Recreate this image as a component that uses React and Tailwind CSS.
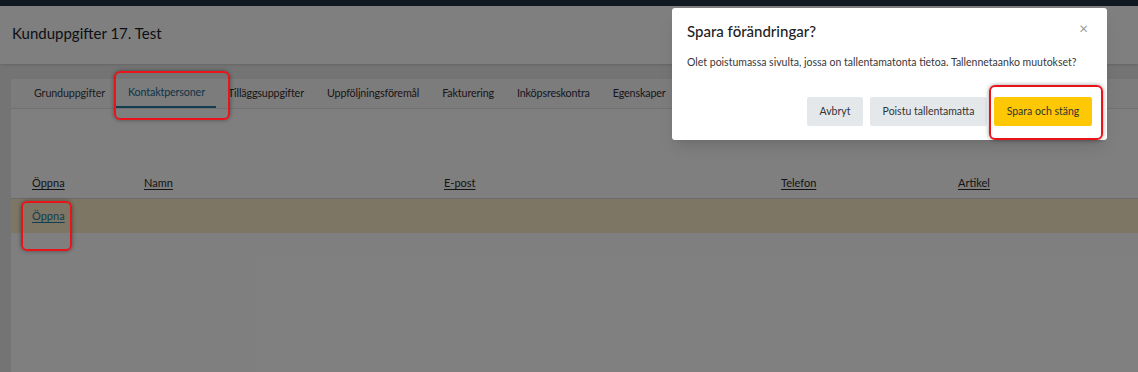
import React from 'react';

const tabs = [
  { name: 'Grunduppgifter', color: 'text-[#3a3a3a]' },
  { name: 'Kontaktpersoner', color: 'text-[#1a6a8e]', active: true },
  { name: 'Tilläggsuppgifter', color: 'text-[#2e2e2e]' },
  { name: 'Uppföljningsföremål', color: 'text-[#3b2a2a]' },
  { name: 'Fakturering', color: 'text-[#3d2a2a]' },
  { name: 'Inköpsreskontra', color: 'text-[#22304a]' },
  { name: 'Egenskaper', color: 'text-[#2f2f3a]' },
];

const columns = [
  { name: 'Öppna', width: 'w-[112px]' },
  { name: 'Namn', width: 'w-[300px]' },
  { name: 'E-post', width: 'w-[337px]' },
  { name: 'Telefon', width: 'w-[177px]' },
  { name: 'Artikel', width: 'flex-1' },
];

export default function App() {
  return (
    <div className="relative w-[1138px] h-[372px] overflow-hidden bg-[#e9e9e9] font-['Lato',_'Noto_Sans',_sans-serif]">
      {/* page underneath the dim layer */}
      <div className="h-[6px] bg-[#223444]" />
      <div className="h-[58px] bg-white flex items-center px-3 pb-[4px] shadow-sm">
        <h1 className="text-[15px] text-[#1c1c2c]">Kunduppgifter 17. Test</h1>
      </div>
      <div className="flex h-[308px] pt-[15px] pl-[11px]">
        <div className="flex-1 flex flex-col bg-white">
          <div className="flex h-[30px] bg-[#f8f8f8] border-b border-[#e2e2e2] pl-[11px]">
            {tabs.map((t) => (
              <div
                key={t.name}
                className={`flex items-center pl-3 pr-[11px] text-[10.75px] tracking-[-0.15px] whitespace-nowrap ${t.color} ${t.active ? 'border-b-2 border-[#2a7ba3]' : ''}`}
              >
                {t.name}
              </div>
            ))}
          </div>

          <div className="pt-[65px]">
            <div className="flex h-[25px] items-start pt-[1px] pl-[21px] border-b border-[#d5d5d5] text-[11px] leading-[15px] text-[#2a2a2a]">
              {columns.map((c) => (
                <div key={c.name} className={c.width}>
                  <span className="underline underline-offset-2">{c.name}</span>
                </div>
              ))}
            </div>
            <div className="flex h-[34px] items-center pl-[21px] bg-[#fcecca] text-[11px]">
              <span className="text-[#1f7aa3] underline underline-offset-2">Öppna</span>
            </div>
          </div>
        </div>
      </div>

      {/* dim layer */}
      <div className="absolute inset-0 bg-black/50" />

      {/* modal */}
      <div className="absolute left-[672px] top-[8px] w-[435px] bg-white rounded-[3px] shadow-lg px-[15px] pt-[12px] pb-[14px]">
        <div className="flex items-start justify-between">
          <h2 className="text-[15px] font-medium text-[#222] leading-[22px]">Spara förändringar?</h2>
          <span className="text-[#9a9a9a] text-[15px] leading-none mt-[1px] mr-[4px]">×</span>
        </div>
        <p className="mt-[12px] text-[10.5px] leading-[16px] whitespace-nowrap text-[#383838]">
          Olet poistumassa sivulta, jossa on tallentamatonta tietoa. Tallennetaanko muutokset?
        </p>
        <div className="mt-[27px] flex justify-end gap-[7px]">
          <button className="h-[29px] w-[56px] flex items-center justify-center rounded-[2px] bg-[#e5e8ea] text-[10.5px] text-[#333]">Avbryt</button>
          <button className="h-[29px] w-[117px] flex items-center justify-center rounded-[2px] bg-[#e5e8ea] text-[10.5px] text-[#333]">Poistu tallentamatta</button>
          <button className="h-[29px] w-[98px] flex items-center justify-center rounded-[2px] bg-[#fec805] text-[10.5px] text-[#333]">Spara och stäng</button>
        </div>
      </div>

      {/* red annotation boxes */}
      <div className="absolute left-[114px] top-[71px] w-[116px] h-[49px] rounded-md border-2 border-[#e8141a] shadow-[0_0_4px_rgba(0,0,0,0.4)]" />
      <div className="absolute left-[21px] top-[201px] w-[51px] h-[50px] rounded-md border-2 border-[#e8141a] shadow-[0_0_4px_rgba(0,0,0,0.4)]" />
      <div className="absolute left-[989px] top-[85px] w-[114px] h-[55px] rounded-md border-2 border-[#e8141a] shadow-[0_0_4px_rgba(0,0,0,0.4)]" />
    </div>
  );
}
